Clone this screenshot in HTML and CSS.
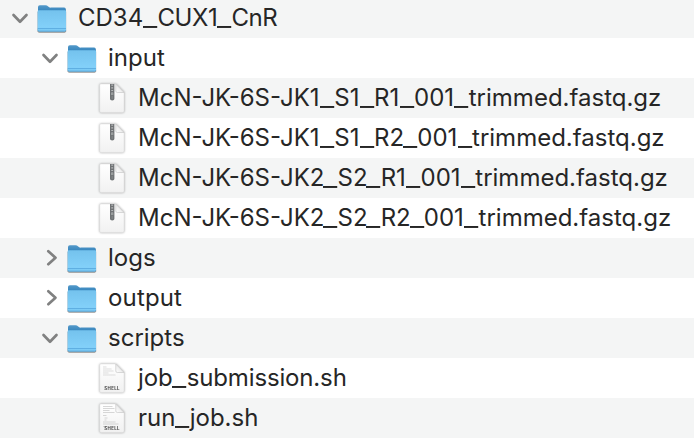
FILE: index.html
```html
<!DOCTYPE html>
<html lang="en">
<head>
<meta charset="utf-8">
<title>CD34_CUX1_CnR</title>
<link rel="stylesheet" href="styles.css">
</head>
<body>
<svg class="defs" width="0" height="0" aria-hidden="true">
  <defs>
    <linearGradient id="front" x1="0" y1="0" x2="0" y2="1"><stop offset="0" stop-color="#74c2ed"/><stop offset=".8" stop-color="#82d0f9"/><stop offset="1" stop-color="#76c6f2"/></linearGradient>
    <linearGradient id="back" x1="0" y1="0" x2="0" y2="1"><stop offset="0" stop-color="#5499c9"/><stop offset=".5" stop-color="#3484bd"/></linearGradient>
    <linearGradient id="paper" x1="0" y1="0" x2="0" y2="1"><stop offset="0" stop-color="#fff"/><stop offset="1" stop-color="#f1f1f1"/></linearGradient>
    <linearGradient id="fold" x1="0" y1="1" x2="1" y2="0"><stop offset="0" stop-color="#fff"/><stop offset=".5" stop-color="#ececec"/><stop offset="1" stop-color="#fafafa"/></linearGradient>
  </defs>
  <symbol id="down" viewBox="0 0 20 20"><path d="M4.5 7 11 13.7 17.5 7" fill="none" stroke="#808181" stroke-width="2.7" stroke-linecap="round" stroke-linejoin="round"/></symbol>
  <symbol id="right" viewBox="0 0 20 20"><path d="M9.3 3.2 16.5 9.7 9.3 16.2" fill="none" stroke="#808181" stroke-width="2.7" stroke-linecap="round" stroke-linejoin="round"/></symbol>
  <symbol id="folder" viewBox="0 0 32 32">
    <path d="M2 5.2Q2 3.2 3.8 3.2H9.5Q11 3.2 12.2 4.5T14.7 5.6H28.2Q29.8 5.6 29.8 7.3V15H2z" fill="url(#back)"/>
    <path d="M1.6 9.6Q1.6 8.3 2.9 8.3H28.8Q30.1 8.3 30.1 9.6V28Q30.1 29.4 28.7 29.4H3Q1.6 29.4 1.6 28z" fill="url(#front)"/>
    <path d="M1.7 26.5H30" stroke="#5fafe2" stroke-width="1"/>
    <path d="M1.8 28Q2 29.2 3.2 29.2H28.5Q29.7 29.2 29.9 28" fill="none" stroke="#5ba8d9" stroke-width=".8"/>
  </symbol>
  <symbol id="page" viewBox="0 0 32 32">
    <path d="M4.8 2H19.8L28 10.5V29Q28 30.4 26.6 30.4H5.2Q3.8 30.4 3.8 29V3Q3.8 2 4.8 2z" fill="url(#paper)" stroke="#dedede" stroke-width=".5"/>
    <path d="M19.8 2V9Q19.8 10.5 21.3 10.5H28z" fill="url(#fold)" stroke="#c8c8c8" stroke-width=".7"/>
  </symbol>
  <symbol id="zip" viewBox="0 0 32 32">
    <use href="#page"/>
    <path d="M14 2H18.4V17Q18.4 18.4 16.2 18.4T14 17z" fill="#707375"/>
    <path d="M16.2 2.5V11" stroke="#b5b8b9" stroke-width="1.9" stroke-dasharray="1.2 1.5"/>
    <path d="M15 11.2H17.4V12.8H15z" fill="#a7aaab"/>
    <path d="M16.2 13.8V17" stroke="#858a8c" stroke-width="1"/>
  </symbol>
  <symbol id="short-text" viewBox="0 0 32 32"><path d="M7 5H10.5M7 7H15.5M7 9H17.5M7 11H12.5M7 13H19.5" stroke="#d0d0d0" stroke-width=".7"/></symbol>
  <symbol id="long-text" viewBox="0 0 32 32"><path d="M7 4.5H16.5M7 6.5H18.5M7 8.5H13.5M7 10.5H18.5M7 13.5H10.5M8.5 16H11.5M8.5 18H10.5M7 20H19.5M7 22H22.5M7 24.5H11" stroke="#c6c6c6" stroke-width=".7"/></symbol>
</svg>
<main class="tree">
  <div class="row"><svg class="arrow"><use href="#down"/></svg><svg class="icon folder"><use href="#folder"/></svg><span class="name">CD34<i>_</i><span class="tight">CUX1</span><i>_</i><span class="tight">CnR</span></span></div>
  <div class="row l1"><svg class="arrow"><use href="#down"/></svg><svg class="icon folder"><use href="#folder"/></svg><span class="name">input</span></div>
  <div class="row l2"><svg class="icon file"><use href="#zip"/></svg><span class="name">McN-JK-6S-JK<b>1</b><i>_</i>S<b>1</b><i>_</i>R<b>1</b><i>_</i>00<b>1</b><i>_</i>trimmed.fastq.gz</span></div>
  <div class="row l2"><svg class="icon file"><use href="#zip"/></svg><span class="name">McN-JK-6S-JK<b>1</b><i>_</i>S<b>1</b><i>_</i>R<em>2</em><i>_</i>00<b>1</b><i>_</i>trimmed.fastq.gz</span></div>
  <div class="row l2"><svg class="icon file"><use href="#zip"/></svg><span class="name">McN-JK-6S-JK<em>2</em><i>_</i>S<em>2</em><i>_</i>R<b>1</b><i>_</i>00<b>1</b><i>_</i>trimmed.fastq.gz</span></div>
  <div class="row l2"><svg class="icon file"><use href="#zip"/></svg><span class="name">McN-JK-6S-JK<em>2</em><i>_</i>S<em>2</em><i>_</i>R<em>2</em><i>_</i>00<b>1</b><i>_</i>trimmed.fastq.gz</span></div>
  <div class="row l1"><svg class="arrow"><use href="#right"/></svg><svg class="icon folder"><use href="#folder"/></svg><span class="name">logs</span></div>
  <div class="row l1"><svg class="arrow"><use href="#right"/></svg><svg class="icon folder"><use href="#folder"/></svg><span class="name loose">output</span></div>
  <div class="row l1"><svg class="arrow"><use href="#down"/></svg><svg class="icon folder"><use href="#folder"/></svg><span class="name">scripts</span></div>
  <div class="row l2"><svg class="icon file" viewBox="0 0 32 32"><use href="#page"/><use href="#short-text"/><text x="16.1" y="27.6" class="tag">SHELL</text></svg><span class="name script">job<i>_</i>submission.sh</span></div>
  <div class="row l2"><svg class="icon file" viewBox="0 0 32 32"><use href="#page"/><use href="#long-text"/><text x="16.1" y="27.6" class="tag">SHELL</text></svg><span class="name">run<i>_</i>job.sh</span></div>
</main>
</body>
</html>
```
FILE: styles.css
```css
body { margin: 0; background: #fff; overflow: hidden; }
.defs { position: absolute; }
.tree { margin-top: -2px; }
.row { display: flex; align-items: center; height: 40px; padding-left: 9px; background: #fff; }
.row:nth-child(odd) { background: #f4f5f5; }
.l1 { padding-left: 39px; }
.l2 { padding-left: 96px; }
.arrow { width: 20px; height: 20px; margin-right: 7px; flex: none; }
.icon { width: 32px; height: 32px; flex: none; }
.folder { filter: drop-shadow(0 1px .7px rgba(0,0,0,.4)); }
.file { filter: drop-shadow(0 .6px .8px rgba(0,0,0,.35)); }
.name { margin-left: 10px; font: 24px/40px Inter, sans-serif; color: #262626; white-space: nowrap; }
.name b, .name em { font-weight: 400; font-style: normal; }
.name b { letter-spacing: .4px; }
.name em { letter-spacing: -1.2px; }
/* widened underscore */
.name i { display: inline-block; width: 14.3px; font-style: normal; letter-spacing: 0; }
.name i { transform: scaleX(1.3); transform-origin: 0 50%; }
.tight { letter-spacing: -.45px; }
.script { letter-spacing: -.15px; }
.loose { letter-spacing: .15px; }
.tag { font: bold 4.4px Inter, sans-serif; letter-spacing: .4px; text-anchor: middle; fill: #444; }
```
